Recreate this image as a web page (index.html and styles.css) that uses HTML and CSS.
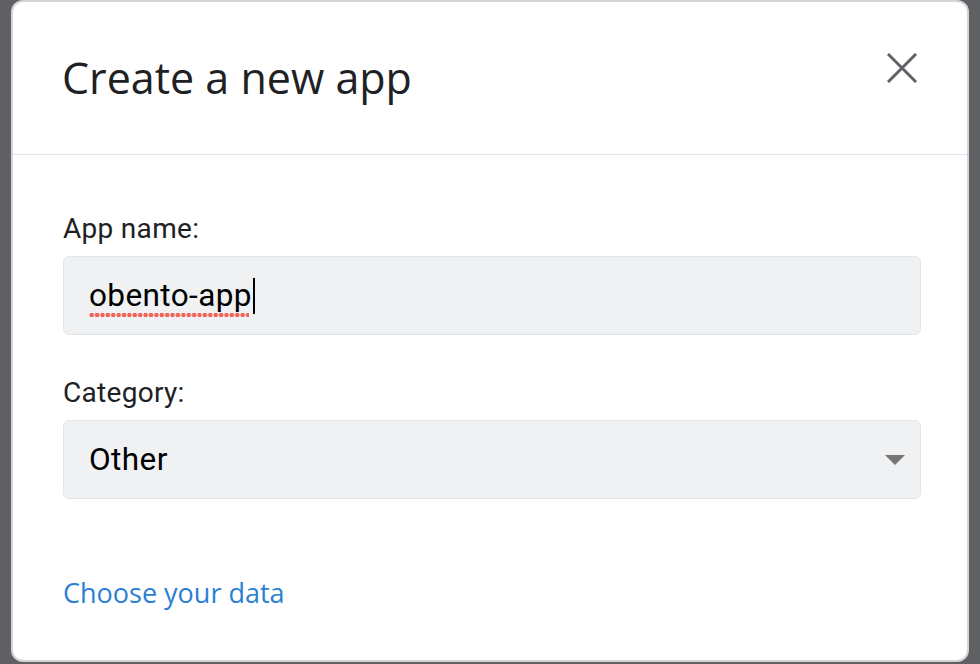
FILE: index.html
```html
<!DOCTYPE html>
<html>
<head>
<meta charset="utf-8">
<link rel="stylesheet" href="styles.css">
</head>
<body>
<div class="dialog">
  <div class="header">
    <h1 class="title">Create a new app</h1>
    <button class="close" aria-label="Close">
      <svg width="30" height="30" viewBox="0 0 30 30"><path d="M2 2 L28 28 M28 2 L2 28" stroke="#5f6368" stroke-width="3" stroke-linecap="square" fill="none"/></svg>
    </button>
  </div>
  <div class="content">
    <label class="label">App name:</label>
    <div class="field">
      <span class="value misspelled">obento-app</span><span class="caret"></span>
    </div>
    <label class="label label-cat">Category:</label>
    <div class="field select">
      <span class="value">Other</span>
      <span class="arrow"></span>
    </div>
    <a class="link" href="#">Choose your data</a>
  </div>
</div>
</body>
</html>
```
FILE: styles.css
```css
html, body {
  margin: 0;
  padding: 0;
}
body {
  background: #5f6064;
  width: 980px;
  height: 664px;
  overflow: hidden;
}
.dialog {
  margin: 2px 13px 0 13px;
  height: 658px;
  background: #ffffff;
  border-radius: 10px;
  box-shadow: 0 0 0 2px #d4d4d4;
  font-family: Roboto, "Liberation Sans", sans-serif;
}
.header {
  height: 152px;
  display: flex;
  align-items: center;
  justify-content: space-between;
  padding: 0 50px 0 49px;
  border-bottom: 1px solid #e1e5ea;
}
.title {
  margin: 0;
  font-family: "Open Sans", sans-serif;
  font-weight: 400;
  font-size: 43px;
  line-height: 56px;
  color: #202124;
}
.close {
  border: none;
  background: none;
  padding: 0;
  width: 30px;
  height: 30px;
  margin-top: -20px;
}
.close svg { display: block; }
.content {
  padding: 60px 46px 0 50px;
  display: flex;
  flex-direction: column;
}
.label {
  font-size: 28px;
  line-height: 28px;
  color: #202124;
  letter-spacing: 0.3px;
}
.label-cat {
  margin-top: 44px;
}
.field {
  margin-top: 13px;
  height: 77px;
  background: #eff1f3;
  border: 1px solid #e3e6e9;
  border-radius: 6px;
  display: flex;
  align-items: center;
  padding: 0 25px;
  position: relative;
}
.select {
  margin-top: 13px;
  justify-content: space-between;
}
.value {
  font-size: 31.5px;
  color: #000000;
  position: relative;
  letter-spacing: 0.4px;
}
.misspelled::after {
  content: "";
  position: absolute;
  left: 0;
  right: 3px;
  bottom: -4px;
  height: 6px;
  background-image: radial-gradient(circle, #f0645a 2px, transparent 2.5px);
  background-size: 5.4px 6px;
  background-repeat: repeat-x;
}
.caret {
  width: 2px;
  height: 36px;
  background: #000;
  margin-left: 1px;
}
.arrow {
  width: 0;
  height: 0;
  border-left: 10px solid transparent;
  border-right: 10px solid transparent;
  border-top: 10px solid #757575;
  margin-right: -10px;
}
.link {
  margin-top: 75px;
  font-family: "Open Sans", sans-serif;
  font-size: 27px;
  color: #2a7fd4;
  text-decoration: none;
  align-self: flex-start;
}
```
